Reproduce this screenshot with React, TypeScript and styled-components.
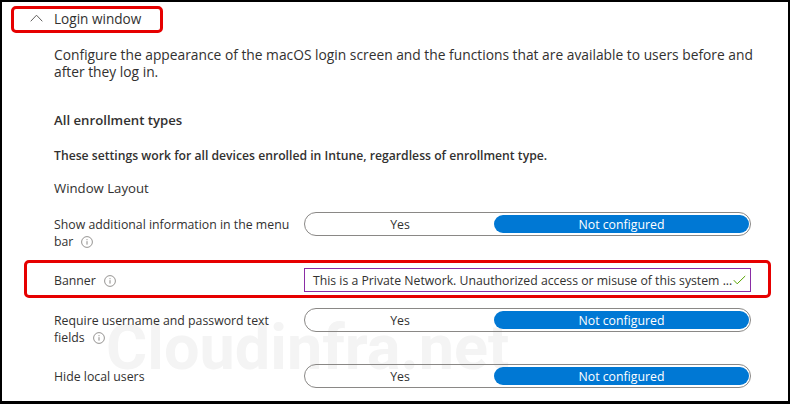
import React from "react";
import styled, { createGlobalStyle } from "styled-components";

const Global = createGlobalStyle`
  html, body { margin: 0; padding: 0; background: #fff; }
  body { font-family: "Open Sans", "Noto Sans", "Liberation Sans", sans-serif; }
`;

const Frame = styled.div`
  position: relative;
  box-sizing: border-box;
  width: 790px;
  height: 404px;
  overflow: hidden;
  background: #fff;
  border-style: solid;
  border-color: #000;
  border-width: 2px 2px 3px 2px;
  padding: 0 37px 0 52px;
  color: #323130;
  font-size: 12.3px;
  line-height: 17px;
`;

const Watermark = styled.div`
  position: absolute;
  left: 104px;
  top: 311px;
  font-family: Roboto, sans-serif;
  font-size: 63px;
  line-height: 70px;
  font-weight: 700;
  color: #f4f4f4;
  white-space: nowrap;
`;

const Callout = styled.div<{ $l: number; $t: number; $w: number; $h: number }>`
  position: absolute;
  box-sizing: border-box;
  left: ${p => p.$l}px;
  top: ${p => p.$t}px;
  width: ${p => p.$w}px;
  height: ${p => p.$h}px;
  border: 3px solid #e60000;
  border-radius: 5px;
  pointer-events: none;
`;

const Content = styled.div`
  position: relative;
  display: flex;
  flex-direction: column;
`;

const Header = styled.div`
  display: flex;
  align-items: center;
  height: 17px;
  margin-top: 8px;
  position: relative;
  font-size: 13.6px;
`;

const Chevron = styled.svg`
  position: absolute;
  left: -24px;
  top: 4px;
  width: 13px;
  height: 8px;
`;

const Para = styled.p<{ $top: number; $bold?: boolean; $size: number }>`
  margin: ${p => p.$top}px 0 0;
  font-size: ${p => p.$size}px;
  font-weight: ${p => (p.$bold ? 600 : 400)};
  white-space: pre;
`;

const Row = styled.div<{ $top: number }>`
  display: grid;
  grid-template-columns: 250px 447px;
  align-items: start;
  margin-top: ${p => p.$top}px;
`;

const Label = styled.div<{ $pad: number }>`
  padding-top: ${p => p.$pad}px;
  white-space: pre-line;
`;

const InfoIcon = styled.svg`
  display: inline-block;
  width: 12px;
  height: 12px;
  margin-left: 8px;
  vertical-align: -2px;
`;

const Toggle = styled.div`
  box-sizing: border-box;
  height: 24px;
  border: 1px solid #8a8886;
  border-radius: 12px;
  display: grid;
  grid-template-columns: 188px 255px;
  padding: 2px 1px;
`;

const Option = styled.div<{ $on?: boolean }>`
  display: flex;
  align-items: center;
  justify-content: center;
  border-radius: 9px;
  height: 18px;
  background: ${p => (p.$on ? "#0078d4" : "transparent")};
  color: ${p => (p.$on ? "#fff" : "#323130")};
`;

const TextBox = styled.div`
  box-sizing: border-box;
  height: 24px;
  border: 1px solid #8a2da5;
  display: flex;
  align-items: center;
  justify-content: space-between;
  padding: 0 4px 0 8px;
  white-space: nowrap;
  font-size: 12.25px;
`;

const Check = styled.svg`
  width: 13px;
  height: 10px;
  flex: none;
`;

const Info = () => (
  <InfoIcon viewBox="0 0 12 12">
    <circle cx="6" cy="6" r="5.4" fill="none" stroke="#8a8886" strokeWidth="0.9" />
    <path d="M6 5.2v3.4M6 3.2v1" stroke="#8a8886" strokeWidth="1" />
  </InfoIcon>
);

const Switch = () => (
  <Toggle>
    <Option>Yes</Option>
    <Option $on>Not configured</Option>
  </Toggle>
);

export default function App() {
  return (
    <>
      <Global />
      <Frame>
        <Watermark>Cloudinfra.net</Watermark>
        <Content>
          <Header>
            <Chevron viewBox="0 0 13 8">
              <path d="M0.7 7.3L6.5 1.2l5.8 6.1" fill="none" stroke="#605e5c" strokeWidth="1" />
            </Chevron>
            Login window
          </Header>
          <Para $top={19} $size={13.8}>
            {"Configure the appearance of the macOS login screen and the functions that are available to users before and\nafter they log in."}
          </Para>
          <Para $top={32} $bold $size={13.2}>All enrollment types</Para>
          <Para $top={18} $bold $size={12.2}>These settings work for all devices enrolled in Intune, regardless of enrollment type.</Para>
          <Para $top={16} $size={13.2}>Window Layout</Para>
          <Row $top={15}>
            <Label $pad={4}>
              {"Show additional information in the menu\nbar"}
              <Info />
            </Label>
            <Switch />
          </Row>
          <Row $top={18}>
            <Label $pad={4}>
              Banner
              <Info />
            </Label>
            <TextBox>
              <span>This is a Private Network. Unauthorized access or misuse of this system ...</span>
              <Check viewBox="0 0 13 10">
                <path d="M0.8 5.2l3.4 3.6L12.2 1" fill="none" stroke="#57a300" strokeWidth="1" />
              </Check>
            </TextBox>
          </Row>
          <Row $top={16}>
            <Label $pad={4}>
              {"Require username and password text\nfields"}
              <Info />
            </Label>
            <Switch />
          </Row>
          <Row $top={18}>
            <Label $pad={4}>Hide local users</Label>
            <Switch />
          </Row>
        </Content>
        <Callout $l={9} $t={4} $w={152} $h={27} />
        <Callout $l={22} $t={258} $w={747} $h={38} />
      </Frame>
    </>
  );
}
